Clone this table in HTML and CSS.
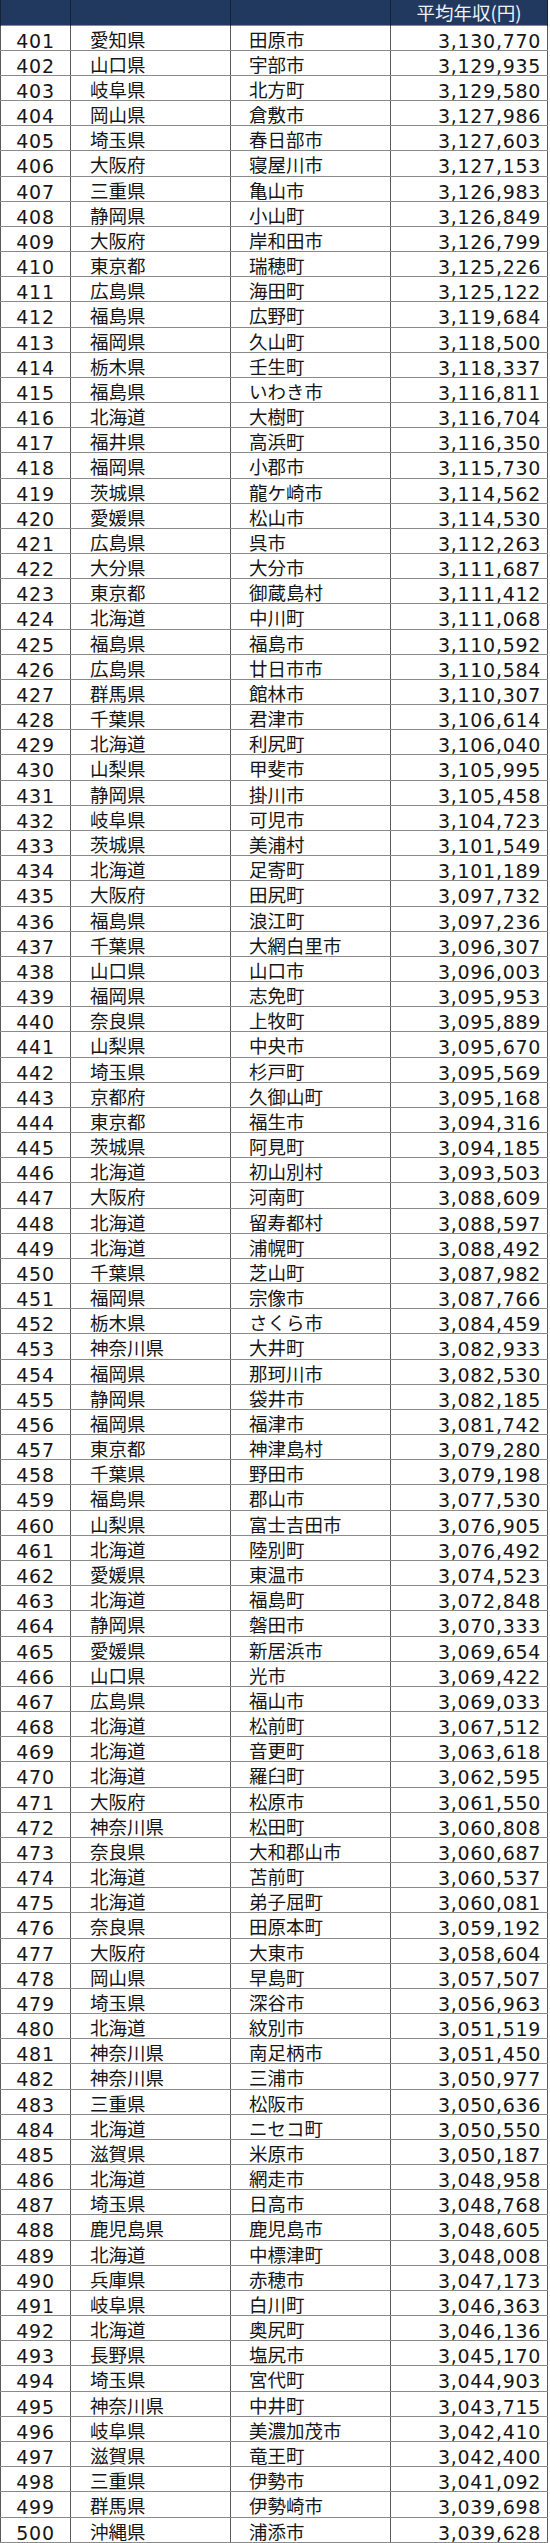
FILE: index.html
```html
<!DOCTYPE html>
<html lang="ja">
<head>
<meta charset="utf-8">
<title>平均年収ランキング 401-500</title>
<link rel="stylesheet" href="styles.css">
</head>
<body>
<table class="rank">
<colgroup><col class="c-rank"><col class="c-pref"><col class="c-city"><col class="c-num"></colgroup>
<thead><tr><th></th><th></th><th></th><th class="num-h">平均年収(円)</th></tr></thead>
<tbody>
<tr><td>401</td><td>愛知県</td><td>田原市</td><td>3,130,770</td></tr>
<tr><td>402</td><td>山口県</td><td>宇部市</td><td>3,129,935</td></tr>
<tr><td>403</td><td>岐阜県</td><td>北方町</td><td>3,129,580</td></tr>
<tr><td>404</td><td>岡山県</td><td>倉敷市</td><td>3,127,986</td></tr>
<tr><td>405</td><td>埼玉県</td><td>春日部市</td><td>3,127,603</td></tr>
<tr><td>406</td><td>大阪府</td><td>寝屋川市</td><td>3,127,153</td></tr>
<tr><td>407</td><td>三重県</td><td>亀山市</td><td>3,126,983</td></tr>
<tr><td>408</td><td>静岡県</td><td>小山町</td><td>3,126,849</td></tr>
<tr><td>409</td><td>大阪府</td><td>岸和田市</td><td>3,126,799</td></tr>
<tr><td>410</td><td>東京都</td><td>瑞穂町</td><td>3,125,226</td></tr>
<tr><td>411</td><td>広島県</td><td>海田町</td><td>3,125,122</td></tr>
<tr><td>412</td><td>福島県</td><td>広野町</td><td>3,119,684</td></tr>
<tr><td>413</td><td>福岡県</td><td>久山町</td><td>3,118,500</td></tr>
<tr><td>414</td><td>栃木県</td><td>壬生町</td><td>3,118,337</td></tr>
<tr><td>415</td><td>福島県</td><td>いわき市</td><td>3,116,811</td></tr>
<tr><td>416</td><td>北海道</td><td>大樹町</td><td>3,116,704</td></tr>
<tr><td>417</td><td>福井県</td><td>高浜町</td><td>3,116,350</td></tr>
<tr><td>418</td><td>福岡県</td><td>小郡市</td><td>3,115,730</td></tr>
<tr><td>419</td><td>茨城県</td><td>龍ケ崎市</td><td>3,114,562</td></tr>
<tr><td>420</td><td>愛媛県</td><td>松山市</td><td>3,114,530</td></tr>
<tr><td>421</td><td>広島県</td><td>呉市</td><td>3,112,263</td></tr>
<tr><td>422</td><td>大分県</td><td>大分市</td><td>3,111,687</td></tr>
<tr><td>423</td><td>東京都</td><td>御蔵島村</td><td>3,111,412</td></tr>
<tr><td>424</td><td>北海道</td><td>中川町</td><td>3,111,068</td></tr>
<tr><td>425</td><td>福島県</td><td>福島市</td><td>3,110,592</td></tr>
<tr><td>426</td><td>広島県</td><td>廿日市市</td><td>3,110,584</td></tr>
<tr><td>427</td><td>群馬県</td><td>館林市</td><td>3,110,307</td></tr>
<tr><td>428</td><td>千葉県</td><td>君津市</td><td>3,106,614</td></tr>
<tr><td>429</td><td>北海道</td><td>利尻町</td><td>3,106,040</td></tr>
<tr><td>430</td><td>山梨県</td><td>甲斐市</td><td>3,105,995</td></tr>
<tr><td>431</td><td>静岡県</td><td>掛川市</td><td>3,105,458</td></tr>
<tr><td>432</td><td>岐阜県</td><td>可児市</td><td>3,104,723</td></tr>
<tr><td>433</td><td>茨城県</td><td>美浦村</td><td>3,101,549</td></tr>
<tr><td>434</td><td>北海道</td><td>足寄町</td><td>3,101,189</td></tr>
<tr><td>435</td><td>大阪府</td><td>田尻町</td><td>3,097,732</td></tr>
<tr><td>436</td><td>福島県</td><td>浪江町</td><td>3,097,236</td></tr>
<tr><td>437</td><td>千葉県</td><td>大網白里市</td><td>3,096,307</td></tr>
<tr><td>438</td><td>山口県</td><td>山口市</td><td>3,096,003</td></tr>
<tr><td>439</td><td>福岡県</td><td>志免町</td><td>3,095,953</td></tr>
<tr><td>440</td><td>奈良県</td><td>上牧町</td><td>3,095,889</td></tr>
<tr><td>441</td><td>山梨県</td><td>中央市</td><td>3,095,670</td></tr>
<tr><td>442</td><td>埼玉県</td><td>杉戸町</td><td>3,095,569</td></tr>
<tr><td>443</td><td>京都府</td><td>久御山町</td><td>3,095,168</td></tr>
<tr><td>444</td><td>東京都</td><td>福生市</td><td>3,094,316</td></tr>
<tr><td>445</td><td>茨城県</td><td>阿見町</td><td>3,094,185</td></tr>
<tr><td>446</td><td>北海道</td><td>初山別村</td><td>3,093,503</td></tr>
<tr><td>447</td><td>大阪府</td><td>河南町</td><td>3,088,609</td></tr>
<tr><td>448</td><td>北海道</td><td>留寿都村</td><td>3,088,597</td></tr>
<tr><td>449</td><td>北海道</td><td>浦幌町</td><td>3,088,492</td></tr>
<tr><td>450</td><td>千葉県</td><td>芝山町</td><td>3,087,982</td></tr>
<tr><td>451</td><td>福岡県</td><td>宗像市</td><td>3,087,766</td></tr>
<tr><td>452</td><td>栃木県</td><td>さくら市</td><td>3,084,459</td></tr>
<tr><td>453</td><td>神奈川県</td><td>大井町</td><td>3,082,933</td></tr>
<tr><td>454</td><td>福岡県</td><td>那珂川市</td><td>3,082,530</td></tr>
<tr><td>455</td><td>静岡県</td><td>袋井市</td><td>3,082,185</td></tr>
<tr><td>456</td><td>福岡県</td><td>福津市</td><td>3,081,742</td></tr>
<tr><td>457</td><td>東京都</td><td>神津島村</td><td>3,079,280</td></tr>
<tr><td>458</td><td>千葉県</td><td>野田市</td><td>3,079,198</td></tr>
<tr><td>459</td><td>福島県</td><td>郡山市</td><td>3,077,530</td></tr>
<tr><td>460</td><td>山梨県</td><td>富士吉田市</td><td>3,076,905</td></tr>
<tr><td>461</td><td>北海道</td><td>陸別町</td><td>3,076,492</td></tr>
<tr><td>462</td><td>愛媛県</td><td>東温市</td><td>3,074,523</td></tr>
<tr><td>463</td><td>北海道</td><td>福島町</td><td>3,072,848</td></tr>
<tr><td>464</td><td>静岡県</td><td>磐田市</td><td>3,070,333</td></tr>
<tr><td>465</td><td>愛媛県</td><td>新居浜市</td><td>3,069,654</td></tr>
<tr><td>466</td><td>山口県</td><td>光市</td><td>3,069,422</td></tr>
<tr><td>467</td><td>広島県</td><td>福山市</td><td>3,069,033</td></tr>
<tr><td>468</td><td>北海道</td><td>松前町</td><td>3,067,512</td></tr>
<tr><td>469</td><td>北海道</td><td>音更町</td><td>3,063,618</td></tr>
<tr><td>470</td><td>北海道</td><td>羅臼町</td><td>3,062,595</td></tr>
<tr><td>471</td><td>大阪府</td><td>松原市</td><td>3,061,550</td></tr>
<tr><td>472</td><td>神奈川県</td><td>松田町</td><td>3,060,808</td></tr>
<tr><td>473</td><td>奈良県</td><td>大和郡山市</td><td>3,060,687</td></tr>
<tr><td>474</td><td>北海道</td><td>苫前町</td><td>3,060,537</td></tr>
<tr><td>475</td><td>北海道</td><td>弟子屈町</td><td>3,060,081</td></tr>
<tr><td>476</td><td>奈良県</td><td>田原本町</td><td>3,059,192</td></tr>
<tr><td>477</td><td>大阪府</td><td>大東市</td><td>3,058,604</td></tr>
<tr><td>478</td><td>岡山県</td><td>早島町</td><td>3,057,507</td></tr>
<tr><td>479</td><td>埼玉県</td><td>深谷市</td><td>3,056,963</td></tr>
<tr><td>480</td><td>北海道</td><td>紋別市</td><td>3,051,519</td></tr>
<tr><td>481</td><td>神奈川県</td><td>南足柄市</td><td>3,051,450</td></tr>
<tr><td>482</td><td>神奈川県</td><td>三浦市</td><td>3,050,977</td></tr>
<tr><td>483</td><td>三重県</td><td>松阪市</td><td>3,050,636</td></tr>
<tr><td>484</td><td>北海道</td><td>ニセコ町</td><td>3,050,550</td></tr>
<tr><td>485</td><td>滋賀県</td><td>米原市</td><td>3,050,187</td></tr>
<tr><td>486</td><td>北海道</td><td>網走市</td><td>3,048,958</td></tr>
<tr><td>487</td><td>埼玉県</td><td>日高市</td><td>3,048,768</td></tr>
<tr><td>488</td><td>鹿児島県</td><td>鹿児島市</td><td>3,048,605</td></tr>
<tr><td>489</td><td>北海道</td><td>中標津町</td><td>3,048,008</td></tr>
<tr><td>490</td><td>兵庫県</td><td>赤穂市</td><td>3,047,173</td></tr>
<tr><td>491</td><td>岐阜県</td><td>白川町</td><td>3,046,363</td></tr>
<tr><td>492</td><td>北海道</td><td>奥尻町</td><td>3,046,136</td></tr>
<tr><td>493</td><td>長野県</td><td>塩尻市</td><td>3,045,170</td></tr>
<tr><td>494</td><td>埼玉県</td><td>宮代町</td><td>3,044,903</td></tr>
<tr><td>495</td><td>神奈川県</td><td>中井町</td><td>3,043,715</td></tr>
<tr><td>496</td><td>岐阜県</td><td>美濃加茂市</td><td>3,042,410</td></tr>
<tr><td>497</td><td>滋賀県</td><td>竜王町</td><td>3,042,400</td></tr>
<tr><td>498</td><td>三重県</td><td>伊勢市</td><td>3,041,092</td></tr>
<tr><td>499</td><td>群馬県</td><td>伊勢崎市</td><td>3,039,698</td></tr>
<tr><td>500</td><td>沖縄県</td><td>浦添市</td><td>3,039,628</td></tr>
</tbody>
</table>
</body>
</html>
```
FILE: styles.css
```css
html, body {
  margin: 0;
  padding: 0;
  background: #ffffff;
}

body {
  font-family: "DejaVu Sans", "Noto Sans CJK JP", sans-serif;
  color: #161616;
}

.rank {
  border-collapse: collapse;
  table-layout: fixed;
  width: 547px;
  font-size: 18.5px;
  line-height: 18px;
}

.c-rank { width: 70px; }
.c-pref { width: 160px; }
.c-city { width: 160px; }
.c-num { width: 157px; }

.rank th {
  height: 25px;
  padding: 0;
  background: #22395f;
  color: #eef1f6;
  font-weight: normal;
  border-left: 1px solid #172236;
  border-right: 1px solid #172236;
  box-sizing: border-box;
  vertical-align: top;
}

.rank th.num-h {
  text-align: center;
  padding-top: 3px;
  font-family: "Noto Sans CJK JP", sans-serif;
  line-height: 18px;
}

.rank td {
  height: 25.18px;
  padding: 6px 0 0 0;
  box-sizing: border-box;
  border-top: 1px solid #8a8a8a;
  border-bottom: 1px solid #8a8a8a;
  border-left: 1px solid #5a5a5a;
  border-right: 1px solid #5a5a5a;
  white-space: nowrap;
  vertical-align: top;
}

.rank td:nth-child(1) {
  text-align: center;
  font-size: 19px;
  letter-spacing: 0.7px;
}

.rank td:nth-child(2) {
  text-align: left;
  padding-left: 19px;
}

.rank td:nth-child(3) {
  text-align: left;
  padding-left: 18px;
}

.rank td:nth-child(4) {
  text-align: right;
  padding-right: 6px;
  font-size: 19px;
  letter-spacing: 0.7px;
}
```
